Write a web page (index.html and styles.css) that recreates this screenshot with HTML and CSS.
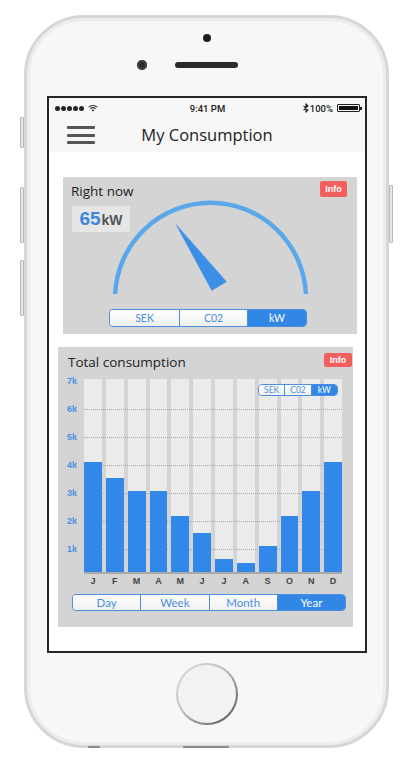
FILE: index.html
```html
<!DOCTYPE html>
<html>
<head>
<meta charset="utf-8">
<title>My Consumption</title>
<link rel="stylesheet" href="styles.css">
</head>
<body>
<div class="phone">
  <span class="side-btn mute"></span>
  <span class="side-btn vol-up"></span>
  <span class="side-btn vol-down"></span>
  <span class="side-btn power"></span>
  <span class="edge-mark mark-a"></span>
  <span class="edge-mark mark-b"></span>

  <div class="phone-top">
    <span class="cam-dot"></span>
    <div class="cam-row"><span class="cam"></span><span class="speaker"></span></div>
  </div>

  <div class="screen">
    <div class="status">
      <div class="status-left">
        <span class="dots"><i></i><i></i><i></i><i></i><i></i></span>
        <svg class="wifi" width="10" height="8" viewBox="0 0 10 8">
          <path d="M0.8 3.2 A6 6 0 0 1 9.2 3.2" fill="none" stroke="#333" stroke-width="1.1"/>
          <path d="M2.4 4.8 A3.8 3.8 0 0 1 7.6 4.8" fill="none" stroke="#333" stroke-width="1.1"/>
          <path d="M5 7.6 L3.6 6.2 A2 2 0 0 1 6.4 6.2 Z" fill="#333"/>
        </svg>
      </div>
      <div class="time">9:41 PM</div>
      <div class="status-right">
        <svg class="bt" width="6" height="10" viewBox="0 0 6 10">
          <path d="M0.6 2.8 L5 7 L3 9 V1 L5 3 L0.6 7.2" fill="none" stroke="#222" stroke-width="1.1"/>
        </svg>
        <span class="pct">100%</span>
        <span class="battery"><span class="battery-fill"></span></span>
      </div>
    </div>

    <div class="nav">
      <div class="burger"><span></span><span></span><span></span></div>
      <h1 class="title">My Consumption</h1>
      <div></div>
    </div>

    <div class="content">
      <section class="card card-now">
        <div class="card-head">
          <h2>Right now</h2>
          <span class="info">Info</span>
        </div>
        <div class="gauge-area">
          <svg class="gauge" width="294" height="105" viewBox="0 0 294 105">
            <path d="M52.1 94 A95.5 95.5 0 0 1 242.9 94" fill="none" stroke="#5aa8ea" stroke-width="4.5"/>
            <polygon points="112,23 148.7,90.7 163.7,81.7" fill="#3b8fe6"/>
          </svg>
          <div class="reading"><span class="num">65</span><span class="unit">kW</span></div>
        </div>
        <div class="seg seg-now">
          <span class="s1">SEK</span><span class="s2">C02</span><span class="s3 on">kW</span>
        </div>
      </section>

      <section class="card card-total">
        <div class="card-head">
          <h2>Total consumption</h2>
          <span class="info">Info</span>
        </div>
        <div class="chart">
          <div class="axis">
            <span>7k</span><span>6k</span><span>5k</span><span>4k</span><span>3k</span><span>2k</span><span>1k</span>
          </div>
          <div class="plot">
            <div class="cols">
              <span></span><span></span><span></span><span></span><span></span><span></span>
              <span></span><span></span><span></span><span></span><span></span><span></span>
            </div>
            <div class="gridlines">
              <span></span><span></span><span></span><span></span><span></span><span></span>
            </div>
            <div class="bars">
              <span style="height:115px"></span>
              <span style="height:99px"></span>
              <span style="height:86px"></span>
              <span style="height:86px"></span>
              <span style="height:61px"></span>
              <span style="height:44px"></span>
              <span style="height:18px"></span>
              <span style="height:14px"></span>
              <span style="height:31px"></span>
              <span style="height:61px"></span>
              <span style="height:86px"></span>
              <span style="height:115px"></span>
            </div>
            <div class="seg seg-mini">
              <span>SEK</span><span>C02</span><span class="on">kW</span>
            </div>
          </div>
          <div></div>
          <div class="months">
            <span>J</span><span>F</span><span>M</span><span>A</span><span>M</span><span>J</span>
            <span>J</span><span>A</span><span>S</span><span>O</span><span>N</span><span>D</span>
          </div>
        </div>
        <div class="seg seg-period">
          <span>Day</span><span>Week</span><span>Month</span><span class="on">Year</span>
        </div>
      </section>
    </div>
  </div>

  <div class="phone-bottom">
    <span class="home"></span>
  </div>
</div>
</body>
</html>
```

FILE: styles.css
```css
* { box-sizing: border-box; }

body {
  margin: 0;
  background: #ffffff;
  font-family: "Open Sans", "Liberation Sans", sans-serif;
  color: #222;
}

/* ---------- phone frame ---------- */
.phone {
  position: relative;
  width: 365px;
  height: 733px;
  margin: 15px 0 0 24px;
  border: 3px solid #d6d6d6;
  border-radius: 60px;
  background: #f7f7f7;
  box-shadow: inset 0 0 0 3px #ececec;
  display: flex;
  flex-direction: column;
}

.side-btn {
  position: absolute;
  width: 4px;
  background: #e6e6e6;
  border: 1px solid #b8b8b8;
  border-radius: 1px;
}
.mute { left: -7px; top: 99px; height: 31px; }
.vol-up { left: -7px; top: 169px; height: 56px; }
.vol-down { left: -7px; top: 242px; height: 56px; }
.power { right: -7px; top: 167px; height: 58px; }

.edge-mark {
  position: absolute;
  bottom: -3px;
  height: 2px;
  background: #8a8a8a;
  border-radius: 1px;
}
.mark-a { left: 61px; width: 12px; }
.mark-b { left: 156px; width: 46px; }

.phone-top {
  height: 78px;
  display: flex;
  flex-direction: column;
  align-items: center;
  padding-top: 16px;
}
.cam-dot {
  width: 8px;
  height: 8px;
  border-radius: 50%;
  background: #1e1e1e;
}
.cam-row {
  align-self: flex-start;
  margin: 18px 0 0 110px;
  display: flex;
  align-items: center;
  gap: 28px;
}
.cam {
  width: 10px;
  height: 10px;
  border-radius: 50%;
  background: #2a2a2a;
  box-shadow: inset 0 0 0 2px #444;
}
.speaker {
  width: 63px;
  height: 6px;
  border-radius: 3px;
  background: #2b2b2b;
}

/* ---------- screen ---------- */
.screen {
  margin-left: 20px;
  width: 320px;
  height: 557px;
  border: 2px solid #262626;
  display: flex;
  flex-direction: column;
  background: #fff;
}

.status {
  height: 20px;
  background: #f7f7f7;
  display: grid;
  grid-template-columns: 1fr auto 1fr;
  align-items: center;
  padding: 0 5px 0 6px;
  font-family: Roboto, "Liberation Sans", sans-serif;
  font-size: 9.5px;
  font-weight: 500;
  color: #222;
}
.status-left { display: flex; align-items: center; gap: 4px; }
.dots { display: flex; gap: 1px; }
.dots i {
  width: 5px;
  height: 5px;
  border-radius: 50%;
  background: #222;
}
.time { text-align: center; }
.status-right {
  justify-self: end;
  display: flex;
  align-items: center;
  gap: 1px;
}
.pct { margin-right: 3px; }
.battery {
  position: relative;
  width: 23px;
  height: 8px;
  border: 1px solid #222;
  border-radius: 1px;
  padding: 1px;
  display: flex;
}
.battery::after {
  content: "";
  position: absolute;
  right: -3px;
  top: 2px;
  width: 2px;
  height: 3px;
  background: #222;
}
.battery-fill { flex: 1; background: #111; }

.nav {
  height: 34px;
  background: #f7f7f7;
  display: grid;
  grid-template-columns: 1fr auto 1fr;
  align-items: center;
}
.burger {
  margin-left: 18px;
  width: 28px;
  display: flex;
  flex-direction: column;
  gap: 4.5px;
}
.burger span {
  height: 3px;
  background: #555;
  border-radius: 1px;
}
.title {
  margin: 0;
  font-size: 16.5px;
  font-weight: 400;
  color: #222;
  line-height: 20px;
}

.content {
  flex: 1;
  background: #fff;
  padding-top: 25px;
  display: flex;
  flex-direction: column;
}

/* ---------- cards ---------- */
.card {
  background: #d4d4d4;
  display: flex;
  flex-direction: column;
}
.card-head {
  display: flex;
  justify-content: space-between;
  align-items: flex-start;
}
.card-head h2 {
  margin: 0;
  font-weight: 400;
  font-size: 13.5px;
  line-height: 18px;
  color: #222;
}
.info {
  background: #f25f5c;
  color: #fff;
  font-family: "Liberation Sans", sans-serif;
  font-weight: 700;
  font-size: 9px;
  text-align: center;
  border-radius: 2px;
}

.card-now {
  margin-left: 14px;
  width: 294px;
  height: 157px;
}
.card-now .card-head {
  height: 23px;
  padding: 5px 10px 0 8px;
}
.card-now .info {
  width: 27px;
  height: 16px;
  line-height: 16px;
  margin-top: -1px;
}

.gauge-area {
  height: 105px;
  display: grid;
}
.gauge-area > * { grid-area: 1 / 1; }
.gauge { overflow: visible; }
.reading {
  align-self: start;
  justify-self: start;
  margin: 6px 0 0 9px;
  width: 58px;
  height: 26px;
  background: #e6e6e6;
  display: flex;
  align-items: baseline;
  justify-content: center;
  font-family: "Liberation Sans", sans-serif;
  font-weight: 700;
  line-height: 26px;
}
.reading .num { color: #3a87e0; font-size: 19px; }
.reading .unit { color: #555; font-size: 14px; margin-left: 1px; }

/* ---------- segmented controls ---------- */
.seg {
  display: flex;
  border: 1px solid #4a8ee0;
  border-radius: 4px;
  overflow: hidden;
  font-family: Lato, "Liberation Sans", sans-serif;
  color: #4a8ee0;
}
.seg span {
  flex: 1;
  display: flex;
  align-items: center;
  justify-content: center;
  background: linear-gradient(#ffffff, #f0f0f0);
  border-left: 1px solid #4a8ee0;
}
.seg span:first-child { border-left: none; }
.seg span.on {
  background: #3287e6;
  color: #fff;
}

.seg-now {
  margin: 4px 0 0 46px;
  width: 198px;
  height: 18px;
  font-size: 10.5px;
}
.seg-now .s1 { flex: 0 0 69px; }
.seg-now .s2 { flex: 0 0 68px; }
.seg-now .s3 { flex: 1; }

.card-total {
  margin: 13px 0 0 9px;
  width: 295px;
  height: 280px;
}
.card-total .card-head {
  height: 32px;
  padding: 5px 1px 0 10px;
}
.card-total h2 {
  font-size: 13.5px;
  line-height: 20px;
}
.card-total .info {
  width: 28px;
  height: 14px;
  line-height: 14px;
  margin-top: 1px;
}

.chart {
  display: grid;
  grid-template-columns: 26px 258px;
  grid-template-rows: 195px 12px;
}
.axis {
  display: flex;
  flex-direction: column;
  padding-left: 9px;
  font-family: "Liberation Sans", sans-serif;
  font-weight: 700;
  font-size: 9px;
  color: #4b8fe0;
}
.axis span {
  height: 28px;
  line-height: 28px;
}
.axis span:first-child { margin-top: -12px; }

.plot {
  display: grid;
  border-bottom: 2px solid #a9a9a9;
  overflow: hidden;
}
.plot > * { grid-area: 1 / 1; }
.cols, .bars, .months {
  display: grid;
  grid-template-columns: repeat(12, 1fr);
  column-gap: 4px;
}
.cols span { background: #ebebeb; }
.gridlines {
  display: flex;
  flex-direction: column;
  padding-top: 30px;
}
.gridlines span {
  flex: 0 0 28px;
  border-top: 1px dotted #a8a8a8;
}
.bars { align-items: end; }
.bars span { background: #3188e8; }

.seg-mini {
  justify-self: end;
  align-self: start;
  margin: 5px 4px 0 0;
  width: 80px;
  height: 12px;
  font-size: 8.5px;
  border-radius: 4px;
}

.months {
  text-align: center;
  font-family: "Liberation Sans", sans-serif;
  font-weight: 700;
  font-size: 9px;
  line-height: 14px;
  color: #444;
}

.seg-period {
  margin: 8px 0 0 14px;
  width: 274px;
  height: 17px;
  font-size: 11.5px;
}

/* ---------- bottom ---------- */
.phone-bottom {
  flex: 1;
  display: flex;
  justify-content: center;
  padding-top: 10px;
}
.home {
  width: 62px;
  height: 62px;
  border-radius: 50%;
  border: 2px solid transparent;
  background:
    linear-gradient(#f2f2f2, #f2f2f2) padding-box,
    linear-gradient(135deg, #e0e0e0 0%, #bdbdbd 45%, #4a4a4a 100%) border-box;
}
```
